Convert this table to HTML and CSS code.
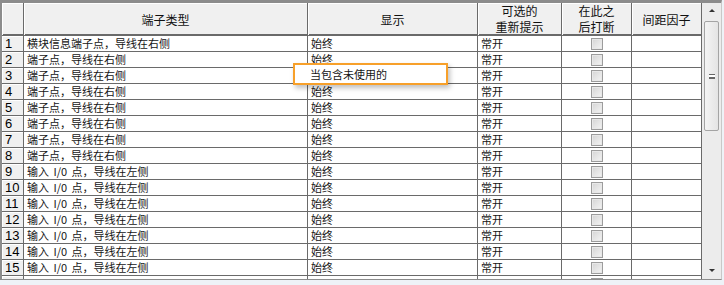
FILE: index.html
```html
<!DOCTYPE html>
<html lang="zh-CN">
<head>
<meta charset="utf-8">
<title>端子类型</title>
<link rel="stylesheet" href="styles.css">
</head>
<body>
<div class="frame">
  <div class="grid">
    <div class="hd corner"></div>
    <div class="hd">端子类型</div>
    <div class="hd">显示</div>
    <div class="hd two">可选的<br>重新提示</div>
    <div class="hd two">在此之<br>后打断</div>
    <div class="hd">间距因子</div>

    <div class="rn">1</div><div class="c">横块信息端子点，导线在右侧</div><div class="c">始终</div><div class="c">常开</div><div class="c ck"><span class="box"></span></div><div class="c"></div>
    <div class="rn">2</div><div class="c">端子点，导线在右侧</div><div class="c">始终</div><div class="c">常开</div><div class="c ck"><span class="box"></span></div><div class="c"></div>
    <div class="rn">3</div><div class="c">端子点，导线在右侧</div><div class="c"></div><div class="c">常开</div><div class="c ck"><span class="box"></span></div><div class="c"></div>
    <div class="rn">4</div><div class="c">端子点，导线在右侧</div><div class="c">始终</div><div class="c">常开</div><div class="c ck"><span class="box"></span></div><div class="c"></div>
    <div class="rn">5</div><div class="c">端子点，导线在右侧</div><div class="c">始终</div><div class="c">常开</div><div class="c ck"><span class="box"></span></div><div class="c"></div>
    <div class="rn">6</div><div class="c">端子点，导线在右侧</div><div class="c">始终</div><div class="c">常开</div><div class="c ck"><span class="box"></span></div><div class="c"></div>
    <div class="rn">7</div><div class="c">端子点，导线在右侧</div><div class="c">始终</div><div class="c">常开</div><div class="c ck"><span class="box"></span></div><div class="c"></div>
    <div class="rn">8</div><div class="c">端子点，导线在右侧</div><div class="c">始终</div><div class="c">常开</div><div class="c ck"><span class="box"></span></div><div class="c"></div>
    <div class="rn">9</div><div class="c">输入 I/0 点，导线在左侧</div><div class="c">始终</div><div class="c">常开</div><div class="c ck"><span class="box"></span></div><div class="c"></div>
    <div class="rn">10</div><div class="c">输入 I/0 点，导线在左侧</div><div class="c">始终</div><div class="c">常开</div><div class="c ck"><span class="box"></span></div><div class="c"></div>
    <div class="rn">11</div><div class="c">输入 I/0 点，导线在左侧</div><div class="c">始终</div><div class="c">常开</div><div class="c ck"><span class="box"></span></div><div class="c"></div>
    <div class="rn">12</div><div class="c">输入 I/0 点，导线在左侧</div><div class="c">始终</div><div class="c">常开</div><div class="c ck"><span class="box"></span></div><div class="c"></div>
    <div class="rn">13</div><div class="c">输入 I/0 点，导线在左侧</div><div class="c">始终</div><div class="c">常开</div><div class="c ck"><span class="box"></span></div><div class="c"></div>
    <div class="rn">14</div><div class="c">输入 I/0 点，导线在左侧</div><div class="c">始终</div><div class="c">常开</div><div class="c ck"><span class="box"></span></div><div class="c"></div>
    <div class="rn">15</div><div class="c">输入 I/0 点，导线在左侧</div><div class="c">始终</div><div class="c">常开</div><div class="c ck"><span class="box"></span></div><div class="c"></div>
    <div class="rn stub"></div><div class="c"></div><div class="c"></div><div class="c"></div><div class="c ck"><span class="box"></span></div><div class="c"></div>
  </div>
  <div class="scroll">
    <div class="arrow up"></div>
    <div class="thumb"><span class="grip"></span></div>
    <div class="track"></div>
    <div class="arrow down"></div>
  </div>
  <div class="editor">当包含未使用的</div>
</div>
</body>
</html>
```

FILE: styles.css
```css
html, body {
  margin: 0;
  padding: 0;
}
body {
  background: #eef2f7;
  width: 724px;
  height: 285px;
  overflow: hidden;
  font-family: "Noto Sans CJK SC", "Noto Sans", sans-serif;
}
.frame {
  position: relative;
  display: flex;
  width: 719px;
  height: 276px;
  border-top: 3px solid #8c8c8c;
  border-left: 2px solid #8c8c8c;
  border-bottom: 1px solid #8c8c8c;
  border-right: 1px solid #c8c8c8;
  overflow: hidden;
  background: #fff;
}
.grid {
  display: grid;
  grid-template-columns: 21px 283px 169px 83px 69px 69px;
  grid-template-rows: 32px;
  grid-auto-rows: 15px;
  gap: 1px;
  padding-right: 1px;
  background: #6a6a6a;
  align-content: start;
  height: 276px;
  overflow: hidden;
  flex: none;
}
.hd {
  background: #f0f0f0;
  color: #111;
  font-size: 12px;
  line-height: 15px;
  display: flex;
  align-items: center;
  justify-content: center;
  text-align: center;
  box-shadow: inset 1px 1px 0 #fff, inset 0 -1px 0 #6a6a6a;
}
.hd.two {
  line-height: 16px;
  padding-bottom: 1px;
}
.rn {
  background: #f0f0f0;
  color: #000;
  font-family: "Liberation Sans", Arial, sans-serif;
  font-size: 13px;
  line-height: 15px;
  padding-left: 3px;
  box-shadow: inset 1px 1px 0 #fff;
}
.c {
  background: #fff;
  color: #151515;
  font-size: 11px;
  line-height: 15px;
  padding-left: 3px;
  white-space: pre;
  word-spacing: 2px;
  overflow: hidden;
}
.ck {
  display: flex;
  align-items: center;
  justify-content: center;
  padding-left: 0;
}
.box {
  width: 10px;
  height: 10px;
  border: 1px solid #9c9c9c;
  background: linear-gradient(135deg, #d4d4d4, #f4f4f4);
  box-shadow: inset 0 0 0 1px #e8e8e8;
}
.scroll {
  flex: none;
  width: 19px;
  height: 276px;
  background: #ececec;
  display: flex;
  flex-direction: column;
  align-items: center;
}
.arrow {
  width: 0;
  height: 0;
  border-left: 3px solid transparent;
  border-right: 3px solid transparent;
  flex: none;
}
.arrow.up {
  border-bottom: 3px solid #333;
  margin-top: 6px;
  margin-bottom: 9px;
}
.arrow.down {
  border-top: 3px solid #333;
  margin-bottom: 7px;
}
.thumb {
  flex: none;
  width: 13px;
  height: 108px;
  border: 1px solid #a4a4a4;
  border-radius: 2px;
  background: linear-gradient(90deg, #f4f4f4, #e4e4e4);
  display: flex;
  align-items: center;
  justify-content: center;
}
.grip {
  width: 6px;
  height: 5px;
  border-top: 1px solid #666;
  border-bottom: 1px solid #666;
  background: linear-gradient(#fff 0 2px, #666 2px 3px, #fff 3px);
  box-sizing: border-box;
}
.track {
  flex: 1;
}
.editor {
  position: absolute;
  left: 291px;
  top: 60px;
  width: 136px;
  height: 16px;
  padding-left: 15px;
  border: 2px solid #f7a02a;
  background: #fff;
  font-size: 11px;
  line-height: 15px;
  padding-top: 2px;
  box-sizing: content-box;
  color: #151515;
  box-shadow: 2px 3px 5px rgba(0, 0, 0, 0.25);
}
```
